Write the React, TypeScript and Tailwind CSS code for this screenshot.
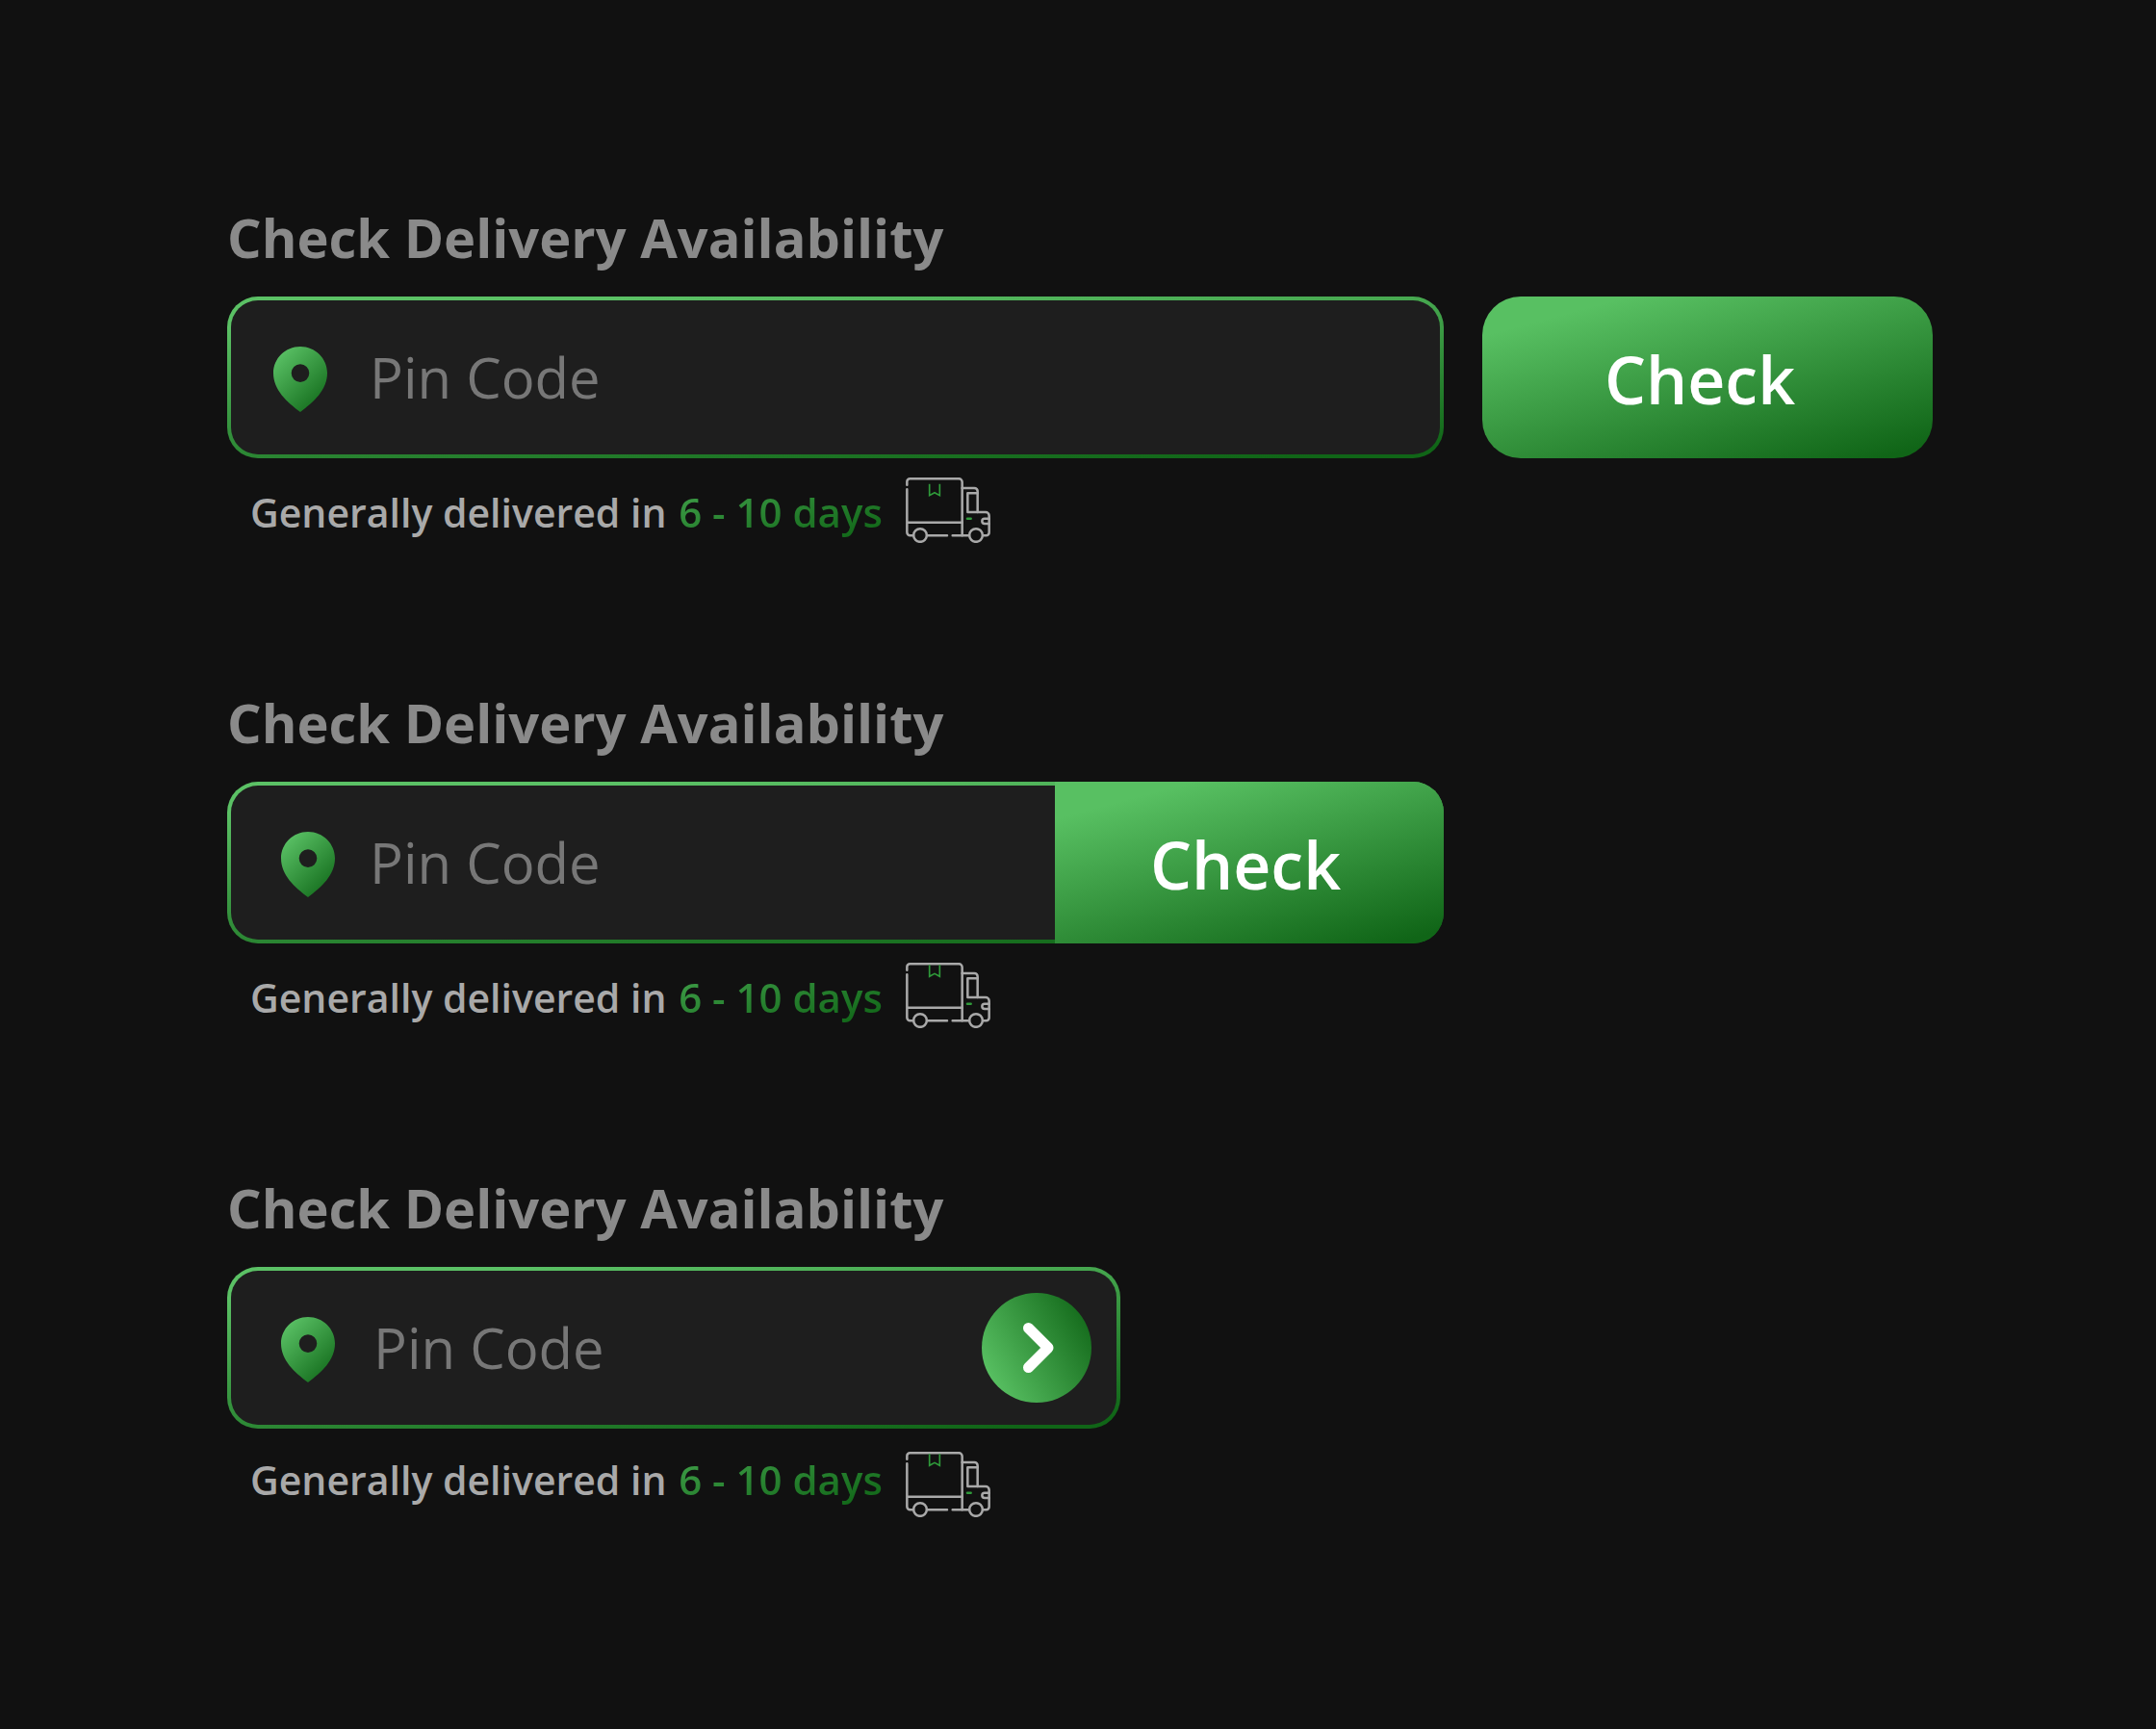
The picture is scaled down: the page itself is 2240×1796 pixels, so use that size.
import React, { useId } from "react";

const uiFont = "font-['Open_Sans','Noto_Sans',sans-serif]";

function PinIcon() {
  const id = useId();
  return (
    <svg aria-hidden="true" viewBox="0 -4 56 72" className="h-[72px] w-14 shrink-0">
      <defs>
        <linearGradient id={id} x1="0.15" y1="0.05" x2="0.8" y2="0.85">
          <stop offset="0" stopColor="#5ac165" />
          <stop offset="1" stopColor="#1a7423" />
        </linearGradient>
      </defs>
      <path
        fill={`url(#${id})`}
        fillRule="evenodd"
        d="M28 0C12.500 0 0 12.300 0 27.500C0 45 14 57.500 28 68C42 57.500 56 45 56 27.500C56 12.300 43.500 0 28 0ZM28 18.300A9.300 9.300 0 1 1 28 36.900A9.300 9.300 0 1 1 28 18.300Z"
      />
    </svg>
  );
}

function TruckIcon({ raisedRibbon = false }: { raisedRibbon?: boolean }) {
  return (
    <svg
      aria-hidden="true"
      viewBox="60 47 264 204"
      className="h-[68px] w-[88px] shrink-0"
      fill="none"
      stroke="#a9a9a9"
      strokeWidth="7.500"
      strokeLinecap="round"
      strokeLinejoin="round"
    >
      <path d="M64 70V60a9 9 0 0 1 9-9H226a10 10 0 0 1 10 10V228" />
      <path d="M64 84V218a10 10 0 0 0 10 10H84M64 187H236" />
      <circle cx="105" cy="227" r="20.500" />
      <path d="M127 228H189M206 228H258" />
      <circle cx="279" cy="227" r="20.500" />
      <path d="M301 228H311a9 9 0 0 0 9-9V166a11 11 0 0 0-11-11H253V96H284" />
      <path d="M236 80H274a10 10 0 0 1 10 10V155" />
      <path d="M320 175H306a8 8 0 0 0 0 16H320" />
      <path stroke="#2f9a3a" d="M252 175H263" />
      <path
        stroke="#2f9a3a"
        strokeWidth="5"
        strokeLinecap="butt"
        strokeLinejoin="miter"
        d={raisedRibbon ? "M134 54V90L150 81L166 90V54" : "M134 67V103L150 94L166 103V67"}
      />
    </svg>
  );
}

function Title({ htmlFor }: { htmlFor: string }) {
  return (
    <h2 className={`text-[56px] leading-[60px] font-bold text-[#8a8a8a] ${uiFont}`}>
      <label htmlFor={htmlFor}>Check Delivery Availability</label>
    </h2>
  );
}

function PinInput({ id }: { id: string }) {
  return (
    <input
      id={id}
      type="text"
      inputMode="numeric"
      placeholder="Pin Code"
      className={`h-full min-w-0 flex-1 bg-transparent pb-0.5 text-[58px] text-white outline-none placeholder:text-[#777777] ${uiFont}`}
    />
  );
}

function Estimate({ className, raisedRibbon }: { className: string; raisedRibbon?: boolean }) {
  return (
    <div className={`flex gap-6 pl-6 ${className}`}>
      <p className={`pt-1 text-[41px] leading-[50px] font-semibold whitespace-nowrap text-[#a9a9a9] ${uiFont}`}>
        Generally delivered in{" "}
        <span className="ml-0.5 bg-[linear-gradient(165deg,#3a9843_15%,#106517_95%)] bg-clip-text text-[42px] text-transparent">
          6 - 10 days
        </span>
      </p>
      <TruckIcon raisedRibbon={raisedRibbon} />
    </div>
  );
}

const checkButton = `bg-[linear-gradient(165deg,#58c062_14%,#106517_95%)] pt-1 text-[68px] font-semibold text-white cursor-pointer ${uiFont}`;

export default function App() {
  return (
    <main className="flex min-h-screen flex-col gap-[156px] bg-[#111111] pt-[216px] pr-[232px] pb-[200px] pl-[236px]">
      <section>
        <Title htmlFor="pin-separate" />
        <form className="mt-8 flex gap-10" onSubmit={(e) => e.preventDefault()}>
          <div className="flex h-[168px] min-w-0 flex-1 rounded-[32px] bg-[linear-gradient(176deg,#5bc165_12%,#106517_95%)] p-1">
            <div className="flex min-w-0 flex-1 items-center gap-11 rounded-[28px] bg-[#1e1e1e] px-11">
              <PinIcon />
              <PinInput id="pin-separate" />
            </div>
          </div>
          <button type="submit" className={`w-[468px] shrink-0 rounded-[40px] pr-4 ${checkButton}`}>
            Check
          </button>
        </form>
        <Estimate className="mt-5 items-center" />
      </section>

      <section>
        <Title htmlFor="pin-joined" />
        <form
          className="mt-8 flex h-[168px] max-w-[1264px] overflow-hidden rounded-[32px] bg-[linear-gradient(176deg,#5bc165_12%,#106517_95%)]"
          onSubmit={(e) => e.preventDefault()}
        >
          <div className="flex min-w-0 flex-1 py-1 pl-1">
            <div className="flex min-w-0 flex-1 items-center gap-9 rounded-l-[28px] bg-[#1e1e1e] pl-[52px]">
              <PinIcon />
              <PinInput id="pin-joined" />
            </div>
          </div>
          <button type="submit" className={`w-[404px] shrink-0 pr-2 ${checkButton}`}>
            Check
          </button>
        </form>
        <Estimate className="mt-5 items-center" raisedRibbon />
      </section>

      <section>
        <Title htmlFor="pin-compact" />
        <form
          className="mt-8 flex h-[168px] max-w-[928px] rounded-[32px] bg-[linear-gradient(174deg,#5bc165_12%,#106517_95%)] p-1"
          onSubmit={(e) => e.preventDefault()}
        >
          <div className="flex min-w-0 flex-1 items-center gap-10 rounded-[28px] bg-[#1e1e1e] pr-[26px] pl-[52px]">
            <PinIcon />
            <PinInput id="pin-compact" />
            <button
              type="submit"
              aria-label="Check"
              className="flex size-[114px] shrink-0 cursor-pointer items-center justify-center rounded-full bg-[linear-gradient(60deg,#58c062_12%,#106517_95%)]"
            >
              <svg aria-hidden="true" viewBox="0 0 114 114" className="size-full" fill="none">
                <path
                  d="M48.500 36.500L69 57L48.500 77.500"
                  stroke="#ffffff"
                  strokeWidth="11"
                  strokeLinecap="round"
                  strokeLinejoin="round"
                />
              </svg>
            </button>
          </div>
        </form>
        <Estimate className="mt-6 items-start" raisedRibbon />
      </section>
    </main>
  );
}
